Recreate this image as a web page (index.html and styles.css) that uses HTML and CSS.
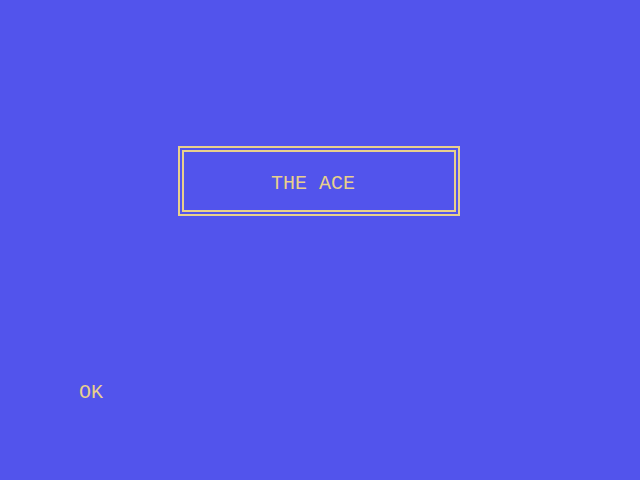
FILE: index.html
```html
<!DOCTYPE html>
<html>
<head>
<meta charset="utf-8">
<link rel="stylesheet" href="styles.css">
</head>
<body>
<div class="screen">
  <div class="title-box">
    <span class="title">THE ACE</span>
  </div>
  <div class="ok">OK</div>
</div>
</body>
</html>
```
FILE: styles.css
```css
html, body {
  margin: 0;
  padding: 0;
  background: #5254ec;
}
.screen {
  width: 640px;
  height: 480px;
  background: #5254ec;
  color: #e8d08c;
  font-family: "Liberation Mono", "DejaVu Sans Mono", monospace;
  font-size: 20px;
  line-height: 20px;
  display: flex;
  flex-direction: column;
  align-items: flex-start;
  padding-top: 146px;
  box-sizing: border-box;
}
.title-box {
  margin-left: 178px;
  width: 282px;
  height: 70px;
  box-sizing: border-box;
  border: 6px double #e8d08c;
  padding: 22px 0 0 87px;
}
.title {
  display: block;
  white-space: pre;
}
.ok {
  margin-left: 79px;
  margin-top: 167px;
}
```
